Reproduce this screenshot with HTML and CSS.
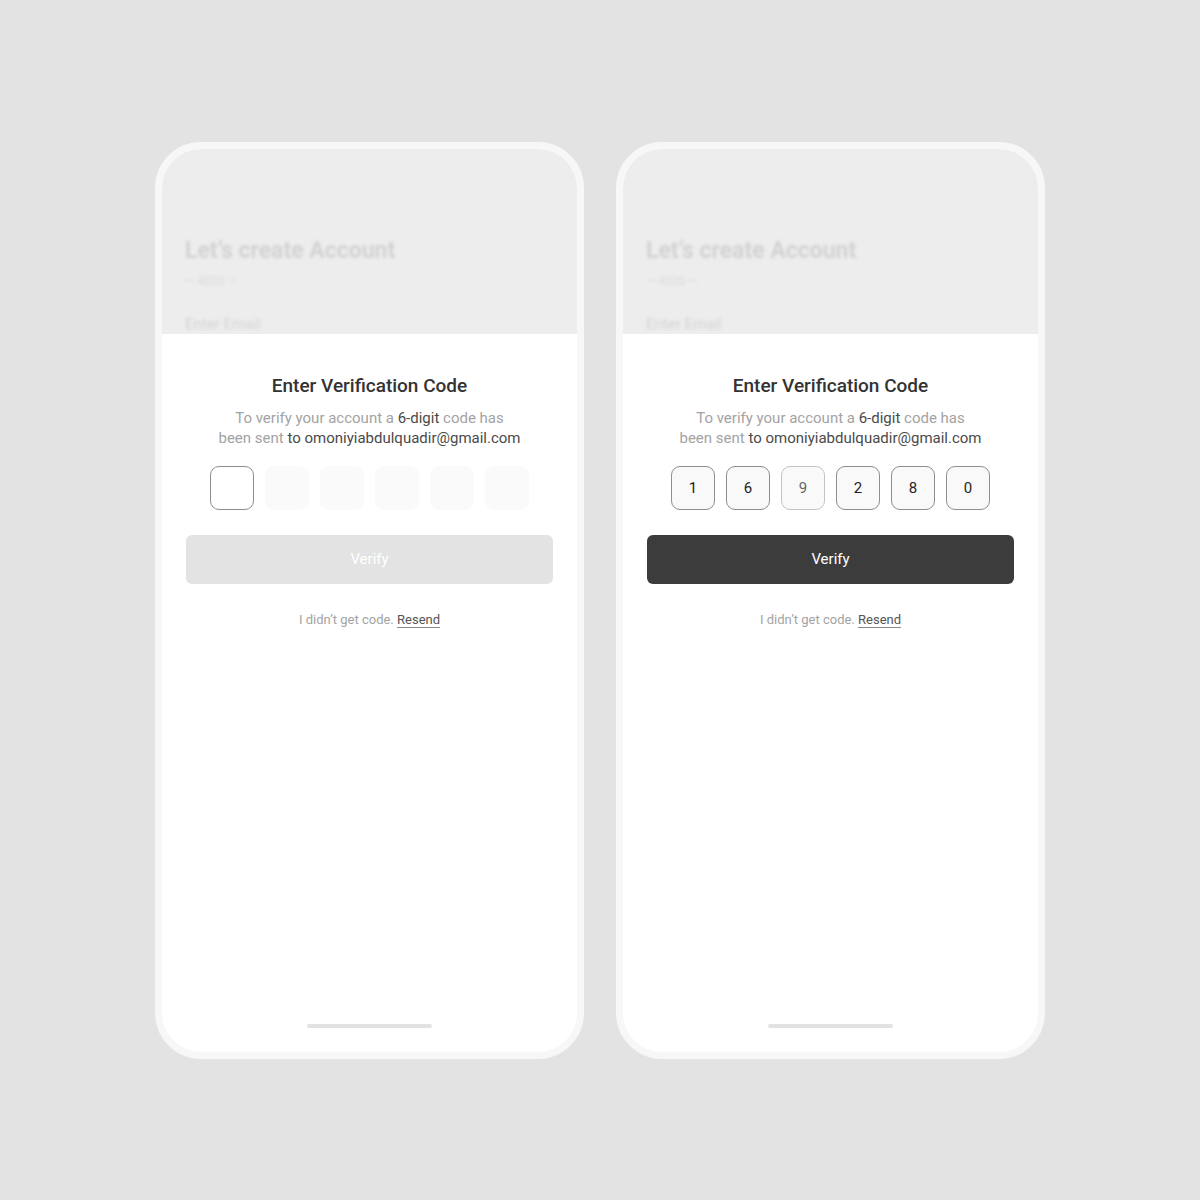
FILE: index.html
```html
<!DOCTYPE html>
<html lang="en">
<head>
    <meta charset="UTF-8">
    <meta name="viewport" content="width=device-width, initial-scale=1.0">
    <title>Enter Verification Code</title>
    <link rel="stylesheet" href="styles.css">
</head>
<body>
    <div class="stage">
        <!-- empty state -->
        <div class="phone">
            <div class="bg_screen">
                <h2 class="bg_tit">Let’s create Account</h2>
                <p class="bg_sub">— 4020 —</p>
                <p class="bg_label">Enter Email</p>
            </div>
            <div class="sheet">
                <h1 class="sheet_tit">Enter Verification Code</h1>
                <p class="sheet_txt">To verify your account a <b>6-digit</b> code has<br>been sent <b>to omoniyiabdulquadir@gmail.com</b></p>
                <div class="code_box">
                    <span class="cell active"></span>
                    <span class="cell"></span>
                    <span class="cell"></span>
                    <span class="cell"></span>
                    <span class="cell"></span>
                    <span class="cell"></span>
                </div>
                <button type="button" class="btn_verify" disabled>Verify</button>
                <p class="resend">I didn’t get code. <a href="#">Resend</a></p>
                <div class="home_bar"></div>
            </div>
        </div>

        <!-- filled state -->
        <div class="phone">
            <div class="bg_screen">
                <h2 class="bg_tit">Let’s create Account</h2>
                <p class="bg_sub">— 4020 —</p>
                <p class="bg_label">Enter Email</p>
            </div>
            <div class="sheet">
                <h1 class="sheet_tit">Enter Verification Code</h1>
                <p class="sheet_txt">To verify your account a <b>6-digit</b> code has<br>been sent <b>to omoniyiabdulquadir@gmail.com</b></p>
                <div class="code_box">
                    <span class="cell filled">1</span>
                    <span class="cell filled">6</span>
                    <span class="cell filled light">9</span>
                    <span class="cell filled">2</span>
                    <span class="cell filled">8</span>
                    <span class="cell filled">0</span>
                </div>
                <button type="button" class="btn_verify on">Verify</button>
                <p class="resend">I didn’t get code. <a href="#">Resend</a></p>
                <div class="home_bar"></div>
            </div>
        </div>
    </div>
</body>
</html>
```

FILE: styles.css
```css
* { box-sizing: border-box; }
body { margin: 0; background: #e3e3e3; font-family: Roboto, "Liberation Sans", sans-serif; }
.stage { height: 1200px; display: flex; justify-content: center; align-items: center; gap: 32px; }

.phone { width: 429px; height: 917px; border: 7px solid #f7f7f7; border-radius: 46px;
    background: #fff; overflow: hidden; display: flex; flex-direction: column; }

.bg_screen { height: 185px; flex-shrink: 0; background: #ededed; padding: 89px 23px 0; }
.bg_screen * { margin: 0; filter: blur(1.8px); }
.bg_tit { font-size: 23px; line-height: 26px; font-weight: 700; color: #d2d2d2; }
.bg_sub { font-size: 12px; line-height: 16px; margin-top: 9px; color: #dadada; }
.bg_label { font-size: 15px; line-height: 18px; margin-top: 26px; color: #d4d4d4; }

.sheet { flex: 1; display: flex; flex-direction: column; align-items: center; padding: 41px 24px 24px; }
.sheet_tit { margin: 0; font-size: 19px; line-height: 22px; font-weight: 500; color: #333; }
.sheet_txt { margin: 11px 0 0; font-size: 15px; line-height: 20px; text-align: center; color: #a3a3a3; }
.sheet_txt b { font-weight: 400; color: #4a4a4a; }

.code_box { display: flex; gap: 11px; margin-top: 18px; }
.cell { width: 44px; height: 44px; border-radius: 9px; background: #fafafa; display: flex;
    align-items: center; justify-content: center; font-size: 15px; color: #1f1f1f; }
.cell.active { background: #fff; border: 1px solid #8e8e8e; }
.cell.filled { background: #f9f9f9; border: 1px solid #8e8e8e; }
.cell.light { border-color: #c4c4c4; color: #666; }

.btn_verify { width: 100%; height: 49px; margin-top: 25px; border: 0; border-radius: 6px;
    background: #e3e3e3; color: #fff; font-family: inherit; font-size: 15px; }
.btn_verify.on { background: #3d3c3d; cursor: pointer; }

.resend { margin: 27px 0 0; font-size: 13px; line-height: 18px; color: #a3a3a3; }
.resend a { color: #555; text-decoration: underline; text-underline-offset: 3px; text-decoration-color: #888; }

.home_bar { margin-top: auto; width: 125px; height: 4px; border-radius: 2px; background: #e2e2e2; }
```
